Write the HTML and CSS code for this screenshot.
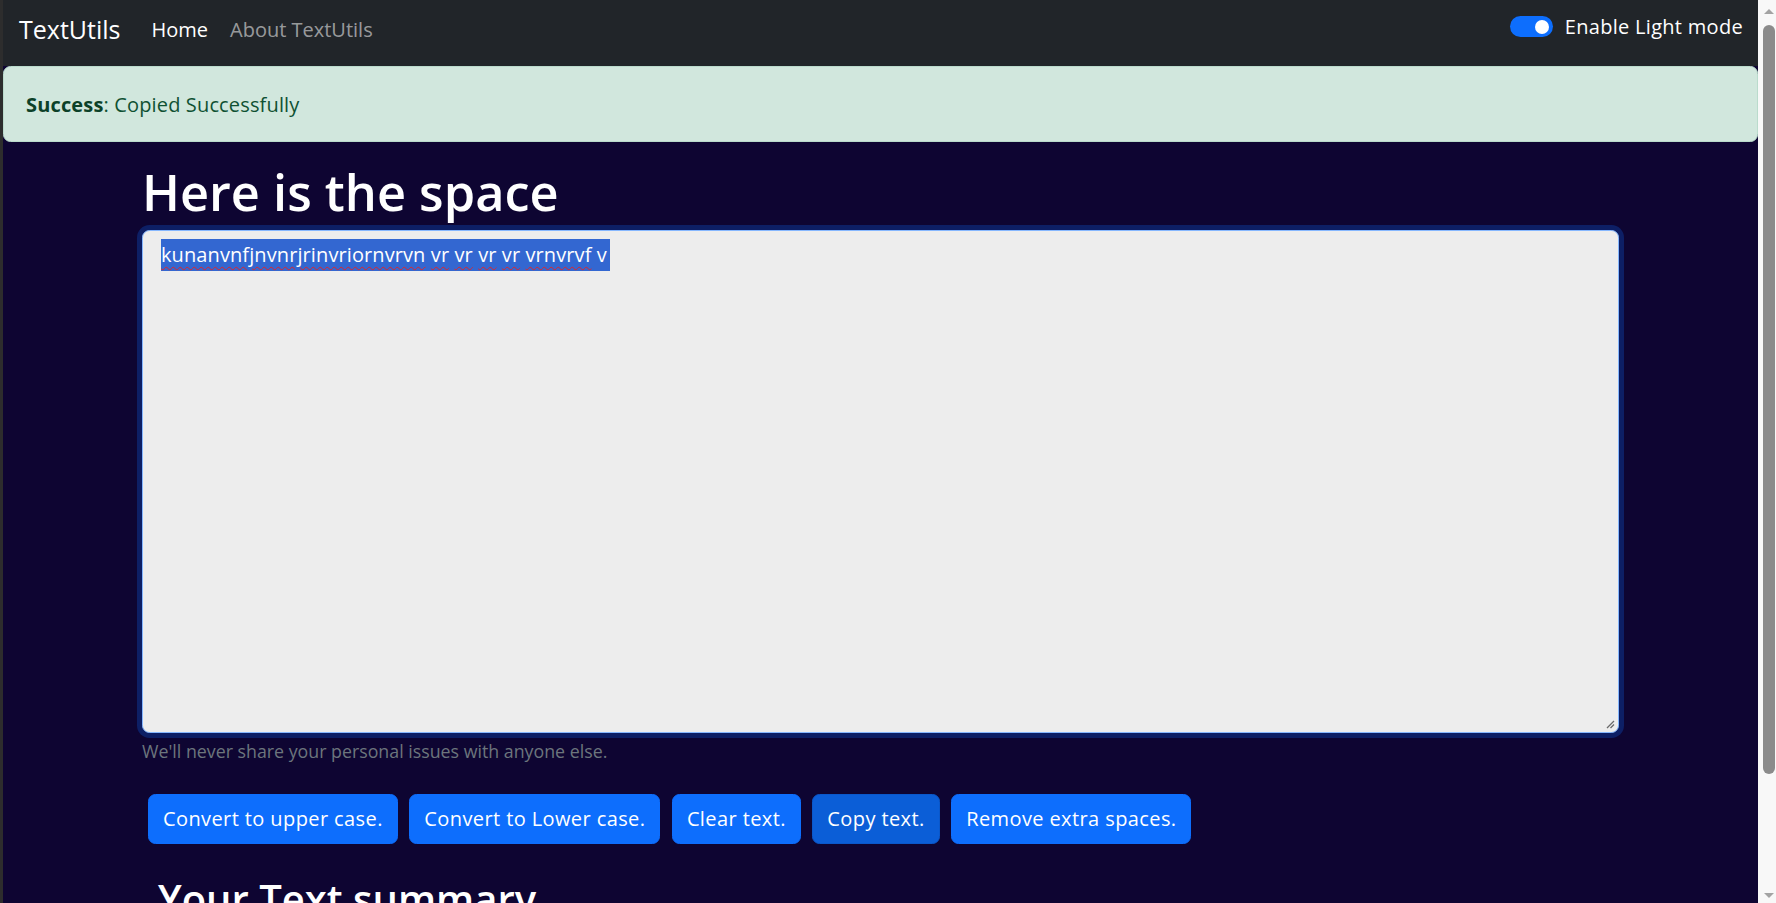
FILE: index.html
```html
<!DOCTYPE html>
<html lang="en">
<head>
<meta charset="utf-8">
<title>TextUtils</title>
<link rel="stylesheet" href="styles.css">
</head>
<body>
  <div class="page">
    <nav class="navbar">
      <a class="brand" href="#">TextUtils</a>
      <ul class="nav">
        <li><a class="nav-link active" href="#">Home</a></li>
        <li><a class="nav-link" href="#">About TextUtils</a></li>
      </ul>
      <div class="mode-switch">
        <span class="toggle"><span class="knob"></span></span>
        <label class="mode-label">Enable Light mode</label>
      </div>
    </nav>

    <div class="alert"><strong>Success</strong>: Copied Successfully</div>

    <main class="container">
      <h1 class="title">Here is the space</h1>
      <div class="textbox">
        <span class="selection"><span class="misspelled">kunanvnfjnvnrjrinvriornvrvn</span> <span class="misspelled">vr</span> <span class="misspelled">vr</span> <span class="misspelled">vr</span> <span class="misspelled">vr</span> <span class="misspelled">vrnvrvf</span> v</span>
        <svg class="grip" width="10" height="10" viewBox="0 0 10 10"><path d="M2 9 L9 2 M5.5 9 L9 5.5" stroke="#6b6b6b" stroke-width="1.3" fill="none"/></svg>
      </div>
      <div class="form-text">We'll never share your personal issues with anyone else.</div>
      <div class="actions">
        <button class="btn">Convert to upper case.</button>
        <button class="btn">Convert to Lower case.</button>
        <button class="btn">Clear text.</button>
        <button class="btn btn-focus">Copy text.</button>
        <button class="btn">Remove extra spaces.</button>
      </div>
      <h2 class="summary">Your Text summary</h2>
    </main>
  </div>

  <div class="scrollbar">
    <span class="arrow arrow-up"></span>
    <span class="thumb"></span>
    <span class="arrow arrow-down"></span>
  </div>
</body>
</html>
```

FILE: styles.css
```css
html, body {
  margin: 0;
  height: 100%;
  overflow: hidden;
}

body {
  display: flex;
  padding-left: 3px;
  background: #2d2d2d;
  font-family: "Open Sans", "Noto Sans", sans-serif;
  font-size: 20px;
  line-height: 1.5;
}

.page {
  flex: 1;
  min-width: 0;
  background: #0e0532;
  overflow: hidden;
}

/* navbar */
.navbar {
  height: 66px;
  box-sizing: border-box;
  background: #212529;
  display: flex;
  align-items: center;
  padding: 0 15px 7px;
}

.brand {
  color: #fff;
  text-decoration: none;
  font-size: 25px;
  line-height: 37px;
  margin-right: 20px;
  padding-left: 1px;
}

.nav {
  list-style: none;
  display: flex;
  margin: 0;
  padding: 0;
}

.nav-link {
  display: block;
  padding: 0 11px;
  color: rgba(255, 255, 255, 0.55);
  text-decoration: none;
  font-size: 20px;
  line-height: 30px;
}

.nav-link.active {
  color: #fff;
}

.mode-switch {
  margin-left: auto;
  margin-bottom: 6px;
  display: flex;
  align-items: center;
  gap: 12px;
  color: #fff;
}

.toggle {
  width: 43px;
  height: 21px;
  border-radius: 11px;
  background: #0d6efd;
  display: flex;
  align-items: center;
  justify-content: flex-end;
  padding-right: 4px;
  box-sizing: border-box;
}

.knob {
  width: 14px;
  height: 14px;
  border-radius: 50%;
  background: #fff;
}

.mode-label {
  font-size: 20px;
  line-height: 30px;
  letter-spacing: 0.3px;
}

/* alert */
.alert {
  height: 76px;
  box-sizing: border-box;
  padding: 23px 20px 21px 22px;
  background: #d1e7dd;
  border: 1px solid #badbcc;
  border-radius: 7.5px;
  color: #0f5132;
  font-size: 20px;
  line-height: 30px;
  letter-spacing: 0.15px;
}

.alert strong {
  color: #0c4128;
  font-weight: 700;
}

/* main */
.container {
  width: 1477px;
  margin: 20px auto 0;
}

.title {
  margin: 0 0 8px;
  color: #fff;
  font-size: 50.5px;
  font-weight: 600;
  line-height: 60px;
}

.textbox {
  position: relative;
  height: 503px;
  box-sizing: border-box;
  padding: 8px 18px;
  background: #ededed;
  border: 1px solid #86b7fe;
  border-radius: 7.5px;
  box-shadow: 0 0 0 5px #0d1f65;
}

.selection {
  display: inline-block;
  line-height: 32px;
  background: #3367d1;
  color: #fff;
  padding-right: 3px;
  letter-spacing: 0.1px;
}

.misspelled {
  text-decoration: underline wavy #e0242a;
  text-decoration-thickness: 1px;
  text-underline-offset: 4px;
}

.grip {
  position: absolute;
  right: 3px;
  bottom: 3px;
}

.form-text {
  margin-top: 5px;
  color: #6c757d;
  font-size: 17.8px;
  line-height: 26px;
}

.actions {
  display: flex;
  gap: 11.5px;
  margin: 30px 0 0 6px;
}

.btn {
  font-family: inherit;
  font-size: 20px;
  line-height: 30px;
  letter-spacing: 0.4px;
  height: 50px;
  padding: 9px 14px;
  border: 1px solid #0d6efd;
  border-radius: 7.5px;
  background: #0d6efd;
  color: #fff;
  cursor: pointer;
}

.btn-focus {
  background: #0b5ed7;
  border-color: #0a58ca;
}

.summary {
  margin: 31px 0 0;
  padding-left: 16px;
  color: #fff;
  font-size: 40px;
  font-weight: 600;
  line-height: 48px;
}

/* scrollbar */
.scrollbar {
  width: 18px;
  flex: none;
  background: #f8f8f8;
  display: flex;
  flex-direction: column;
  align-items: flex-start;
  padding-left: 5px;
  box-sizing: border-box;
}

.arrow {
  width: 0;
  height: 0;
  border-left: 5px solid transparent;
  border-right: 5px solid transparent;
  margin-left: 1px;
}

.arrow-up {
  border-bottom: 5px solid #a3a3a3;
  margin-top: 9px;
}

.arrow-down {
  border-top: 5px solid #a3a3a3;
  margin-top: auto;
  margin-bottom: 5px;
}

.thumb {
  width: 12px;
  height: 749px;
  margin-top: 11px;
  border-radius: 6px;
  background: #8b8b8b;
}
```
